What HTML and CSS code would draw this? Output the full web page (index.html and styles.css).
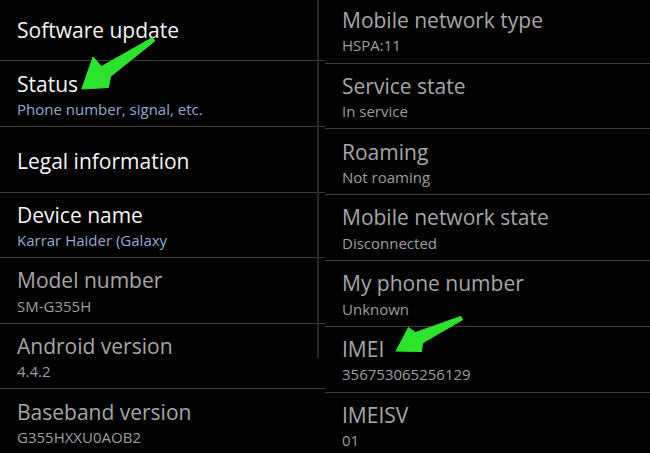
FILE: index.html
```html
<!DOCTYPE html>
<html>
<head>
<meta charset="utf-8">
<link rel="stylesheet" href="styles.css">
</head>
<body>
<div class="page">
  <section class="panel panel-left">
    <div class="row"><div class="title">Software update</div></div>
    <div class="row"><div class="title">Status</div><div class="sub sub-blue">Phone number, signal, etc.</div></div>
    <div class="row"><div class="title">Legal information</div></div>
    <div class="row"><div class="title">Device name</div><div class="sub sub-blue">Karrar Haider (Galaxy</div></div>
    <div class="row"><div class="title dim">Model number</div><div class="sub">SM-G355H</div></div>
    <div class="row"><div class="title dim">Android version</div><div class="sub">4.4.2</div></div>
    <div class="row"><div class="title dim">Baseband version</div><div class="sub">G355HXXU0AOB2</div></div>
    <div class="scrollbar"></div>
  </section>
  <section class="panel panel-right">
    <div class="row"><div class="title dim">Mobile network type</div><div class="sub">HSPA:11</div></div>
    <div class="row"><div class="title dim">Service state</div><div class="sub">In service</div></div>
    <div class="row"><div class="title dim">Roaming</div><div class="sub">Not roaming</div></div>
    <div class="row"><div class="title dim">Mobile network state</div><div class="sub">Disconnected</div></div>
    <div class="row"><div class="title dim">My phone number</div><div class="sub">Unknown</div></div>
    <div class="row"><div class="title dim">IMEI</div><div class="sub">356753065256129</div></div>
    <div class="row"><div class="title dim">IMEISV</div><div class="sub">01</div></div>
  </section>
  <svg class="arrows" width="650" height="453" viewBox="0 0 650 453">
    <polygon class="arrow" points="152.6,37.6 154.8,41 110.5,76.5 108.5,87.5 81.8,89 93,57 101.5,66.5"/>
    <polygon class="arrow" points="460.8,316.4 462.5,319.8 422.5,343 421.5,351.5 396,351 408.5,327.5 415.5,332.5"/>
  </svg>
</div>
</body>
</html>
```
FILE: styles.css
```css
html, body {
  margin: 0;
  padding: 0;
  background: #000;
}
body {
  width: 650px;
  height: 453px;
  overflow: hidden;
  font-family: "Open Sans", "Noto Sans", "DejaVu Sans", sans-serif;
}
.page {
  position: relative;
  display: flex;
  width: 650px;
  height: 453px;
  overflow: hidden;
  background: #020202;
}
.panel {
  position: relative;
  width: 325px;
  display: flex;
  flex-direction: column;
  flex: none;
}
.panel-left {
  margin-top: -4.2px;
}
.panel-right {
  margin-top: -2.2px;
}
.row {
  box-sizing: border-box;
  height: 65.6px;
  flex: none;
  padding: 3px 0 0 17px;
  border-bottom: 1px solid #3d3d3d;
  display: flex;
  flex-direction: column;
  justify-content: center;
}
.panel-right .row {
  height: 65.8px;
}
.title {
  font-size: 21px;
  line-height: 26px;
  color: #f4f4f4;
  white-space: nowrap;
}
.title.dim {
  color: #a6a6a6;
}
.sub {
  margin-top: 1.3px;
  font-size: 15px;
  line-height: 22px;
  color: #9e9e9e;
  white-space: nowrap;
}
.sub-blue {
  color: #93aad3;
}
.scrollbar {
  position: absolute;
  top: 4px;
  right: 6px;
  width: 2px;
  height: 358px;
  background: #2a2a2a;
}
.arrows {
  position: absolute;
  left: 0;
  top: 0;
  pointer-events: none;
}
.arrow {
  fill: #2ee32e;
  stroke: #2ee32e;
  stroke-width: 1;
  stroke-linejoin: round;
}
```
